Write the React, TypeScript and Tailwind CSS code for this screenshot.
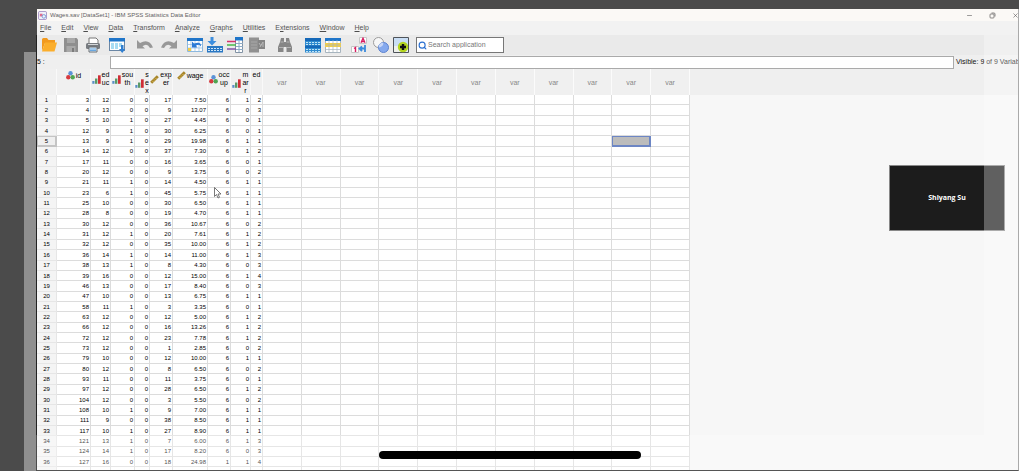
import { Fragment, ReactNode, useState } from 'react';
import { Minus, Search, X } from 'lucide-react';

enum Measure {
  Nominal,
  Ordinal,
  Scale,
}

interface Variable {
  name: string;
  lines: string[];
  width: string;
  measure?: Measure;
}

const VARIABLES: Variable[] = [
  { name: 'id', lines: ['id'], width: 'w-[34px]', measure: Measure.Nominal },
  { name: 'educ', lines: ['ed', 'uc'], width: 'w-[20px]', measure: Measure.Ordinal },
  { name: 'south', lines: ['sou', 'th'], width: 'w-[24px]', measure: Measure.Ordinal },
  { name: 'sex', lines: ['s', 'e', 'x'], width: 'w-[15px]', measure: Measure.Ordinal },
  { name: 'exper', lines: ['exp', 'er'], width: 'w-[23px]', measure: Measure.Scale },
  { name: 'wage', lines: ['wage'], width: 'w-[35px]', measure: Measure.Scale },
  { name: 'occup', lines: ['occ', 'up'], width: 'w-[23px]', measure: Measure.Nominal },
  { name: 'marr', lines: ['m', 'ar', 'r'], width: 'w-[20px]', measure: Measure.Ordinal },
  { name: 'ed', lines: ['ed'], width: 'w-[12px]' },
];

const EMPTY_COLUMNS = Array.from({ length: 11 }, (_, i) => i);

const ROWS = `3 12 0 0 17 7.50 6 1 2
4 13 0 0 9 13.07 6 0 3
5 10 1 0 27 4.45 6 0 1
12 9 1 0 30 6.25 6 0 1
13 9 1 0 29 19.98 6 1 1
14 12 0 0 37 7.30 6 1 2
17 11 0 0 16 3.65 6 0 1
20 12 0 0 9 3.75 6 0 2
21 11 1 0 14 4.50 6 1 1
23 6 1 0 45 5.75 6 1 1
25 10 0 0 30 6.50 6 1 1
28 8 0 0 19 4.70 6 1 1
30 12 0 0 36 10.67 6 0 2
31 12 1 0 20 7.61 6 1 2
32 12 0 0 35 10.00 6 1 2
36 14 1 0 14 11.00 6 1 3
38 13 1 0 8 4.30 6 0 3
39 16 0 0 12 15.00 6 1 4
46 13 0 0 17 8.40 6 0 3
47 10 0 0 13 6.75 6 1 1
58 11 1 0 3 3.35 6 0 1
63 12 0 0 12 5.00 6 1 2
66 12 0 0 16 13.26 6 1 2
72 12 0 0 23 7.78 6 1 2
73 12 0 0 1 2.85 6 0 2
79 10 0 0 12 10.00 6 1 1
80 12 0 0 8 6.50 6 0 2
93 11 0 0 11 3.75 6 0 1
97 12 0 0 28 6.50 6 1 2
104 12 0 0 3 5.50 6 0 2
108 10 1 0 9 7.00 6 1 1
111 9 0 0 38 8.50 6 1 1
117 10 1 0 27 8.90 6 1 1
121 13 1 0 7 6.00 6 1 3
124 14 1 0 17 8.20 6 0 3
127 16 0 0 18 24.98 1 1 4
128 14 1 0 21 12.05 1 0 3`
  .split('\n')
  .map((line) => line.split(' '));

// [label, index of the access key]
const MENUS: [string, number][] = [
  ['File', 0],
  ['Edit', 0],
  ['View', 0],
  ['Data', 0],
  ['Transform', 0],
  ['Analyze', 0],
  ['Graphs', 0],
  ['Utilities', 0],
  ['Extensions', 1],
  ['Window', 0],
  ['Help', 0],
];

interface Tool {
  label: string;
  space: string;
  icon: ReactNode;
}

const TOOLS: Tool[] = [
  {
    label: 'Open',
    space: 'ml-1',
    icon: (
      <>
        <path d="M1 14V2.5Q1 1 2.500 1H6l1.500 2H14v3H4z" fill="#f29a1f" />
        <path d="M1 14.500 4 5.500H16L13.500 14.500z" fill="#fbae2c" />
      </>
    ),
  },
  {
    label: 'Save',
    space: 'ml-1.5',
    icon: (
      <>
        <path d="M1 1h12.500L15 2.500V15H1z" fill="#8f8f8f" />
        <path d="M4 1h8v5H4zM3.500 9h9v6h-9z" fill="#a9a9a9" />
        <path d="M9 11h2v4H9z" fill="#7c7c7c" />
      </>
    ),
  },
  {
    label: 'Print',
    space: 'ml-1.5',
    icon: (
      <>
        <path d="M4 6V1h7l2 2v3" fill="#fff" stroke="#777" />
        <rect x="1" y="6" width="14" height="6" rx="1.500" fill="#777b80" />
        <path d="M3 7.500h10" stroke="#d5d8da" />
        <path d="M4 10h8v5H4z" fill="#dcecf9" stroke="#6c7074" />
        <path d="M5 12h6M5 13.500h6" stroke="#4a95d9" strokeWidth=".8" />
      </>
    ),
  },
  {
    label: 'Recall dialogs',
    space: 'ml-2',
    icon: (
      <>
        <rect x=".5" y="1.500" width="15" height="12" fill="#fff" stroke="#6b87a5" />
        <path d="M0 1h16v3.500H0z" fill="#1f75c9" />
        <path d="M2 6h3v6H2zM6 6h3v6H6zM10 6h3v4h-3z" fill="#a8dcf3" />
        <path d="M12 8h2.500v4H16.500L13.200 16 10 12h2z" fill="#317fd0" />
      </>
    ),
  },
  {
    label: 'Undo',
    space: 'ml-3',
    icon: <path d="M0 3v8.500h8L5.500 9.300Q10 5.500 13 11l3-.5Q12 1 3 6z" fill="#989898" />,
  },
  {
    label: 'Redo',
    space: 'ml-2',
    icon: <path d="M16 3v8.500H8l2.500-2.200Q6 5.500 3 11l-3-.5Q4 1 13 6z" fill="#989898" />,
  },
  {
    label: 'Go to case',
    space: 'ml-2.5',
    icon: (
      <>
        <path d="M.5 1.500h15v13H.5z" fill="#fff" stroke="#8db8dd" />
        <path d="M0 1h16v3H0z" fill="#1f75c9" />
        <path d="M4 4v11M8 4v11M12 4v11M0 7.500h16M0 11h16" stroke="#8fbce2" strokeWidth=".7" />
        <path d="M1 11h3v3H1z" fill="#f5ce46" />
        <path d="M5 4.500v6h5.500L9 8.800q3-2.500 5 .7.500-5.500-7-3z" fill="#2b7bd6" />
      </>
    ),
  },
  {
    label: 'Go to variable',
    space: 'ml-1',
    icon: (
      <>
        <path d="M3.500 0h3v4h3L5 8.500.5 4h3z" fill="#3d8ede" />
        <path d="M0 9h16v6.500H0z" fill="#2a78c4" />
        <path d="M1 11.500h14M1 13.500h14" stroke="#cfe6f7" strokeDasharray="2 1" />
      </>
    ),
  },
  {
    label: 'Variables',
    space: 'ml-1',
    icon: (
      <>
        <path d="M8.500.5h7v15h-7z" fill="#fff" stroke="#8293a5" />
        <path d="M8 0h8v3.500H8z" fill="#1f75c9" />
        <path d="M12 4v11M9 6.500h7M9 9.500h7M9 12.500h7" stroke="#8eabc6" />
        <path d="M0 4.500h9" stroke="#d6336c" strokeWidth="1.500" />
        <path d="M0 8h9" stroke="#49b749" strokeWidth="1.500" />
        <path d="M0 12h9" stroke="#8353a5" strokeWidth="1.500" />
      </>
    ),
  },
  {
    label: 'Run descriptive statistics',
    space: 'ml-1.5',
    icon: (
      <>
        <path d="M0 .5h10v15H0z" fill="#919191" />
        <path d="M9 3h7v9H9z" fill="#858585" />
        <path d="M2 5h6M2 8h6M2 11h6" stroke="#a8a8a8" />
        <path d="m11 10 3-5v5M10 6l2 3" fill="none" stroke="#b8b8b8" />
      </>
    ),
  },
  {
    label: 'Find',
    space: 'ml-3',
    icon: (
      <>
        <path d="M4 1h3v4h2V1h3l1 4 2 5v5H9.500v-5h-3v5H1v-5l2-5z" fill="#868686" />
        <path d="M2 10.500h4M10 10.500h4M3.500 5h3M9.500 5h3" stroke="#b5b5b5" />
      </>
    ),
  },
  {
    label: 'Split file',
    space: 'ml-3',
    icon: (
      <>
        <path d="M0 1h16v14.500H0z" fill="#2f8bd0" />
        <path d="M0 1h16v3H0zM0 8.500h16v2.500H0z" fill="#1568b8" />
        <path d="M1 5.500h14M1 7.500h14M1 12.500h14M1 14.500h14" stroke="#bfe3f5" strokeDasharray="2 1" />
      </>
    ),
  },
  {
    label: 'Select cases',
    space: 'ml-1',
    icon: (
      <>
        <path d="M.5 1.500h15v14H.5z" fill="#fff" stroke="#a8b5bf" />
        <path d="M0 1h16v3H0z" fill="#1f75c9" />
        <path d="M0 6h16v4H0z" fill="#f6cf43" />
        <path d="M4 3v13M8 3v13M12 3v13M0 8h16M0 12.500h16" stroke="#a8b5bf" strokeWidth=".7" />
      </>
    ),
  },
  {
    label: 'Value labels',
    space: 'ml-2.5',
    icon: (
      <>
        <path d="M8.500.5h7v6h-7zM.5 9.500h7v6h-7z" fill="#fff" stroke="#c6c6c6" />
        <path d="m10 5.800 2-4.600 2 4.600M10.800 4.500h2.400" fill="none" stroke="#d81b60" strokeWidth="1.300" />
        <path d="m3 11.500 1.500-1V15" fill="none" stroke="#d81b60" strokeWidth="1.400" />
        <path d="M14 8v7M14 11.500H9m2-2-2.500 2L11 14" fill="none" stroke="#3c8bdc" strokeWidth="1.800" />
      </>
    ),
  },
  {
    label: 'Use variable sets',
    space: 'ml-1.5',
    icon: (
      <>
        <circle cx="5.500" cy="5.500" r="5" fill="#f7f7f7" stroke="#9b9b9b" />
        <circle cx="10.500" cy="10.500" r="5" fill="#85a9ee" stroke="#5c82cf" />
        <path d="M5.700 10.500A5 5 0 0 0 10.400 5.600 5 5 0 0 0 5.700 10.500" fill="#c7d6f6" />
      </>
    ),
  },
  {
    label: 'Customize toolbar',
    space: 'ml-1',
    icon: (
      <>
        <path d="M.5.5h15v15H.5z" fill="#c9def5" stroke="#4f545a" />
        <path d="M1 9h14v6H1z" fill="#edf0ea" />
        <circle cx="10" cy="10" r="5.200" fill="#b4d51f" />
        <path d="M10 7v6M7 10h6" stroke="#111" strokeWidth="2.400" />
      </>
    ),
  },
];

function MeasureIcon({ measure }: { measure: Measure }) {
  return (
    <svg viewBox="0 0 9 9" className="size-[9px] shrink-0" aria-hidden="true">
      {measure === Measure.Nominal && (
        <>
          <circle cx="4.500" cy="2.300" r="2.200" fill="#5b92d6" />
          <circle cx="2.300" cy="6.300" r="2.200" fill="#d63a3f" />
          <circle cx="6.700" cy="6.300" r="2.200" fill="#4fa552" />
        </>
      )}
      {measure === Measure.Ordinal && (
        <>
          <path d="M.3 6h2.200v2.800H.3z" fill="#5a8fc7" />
          <path d="M3 3.500h2.400v5.300H3z" fill="#5c9a68" />
          <path d="M6 .3h2.700v8.500H6z" fill="#cf2e36" />
        </>
      )}
      {measure === Measure.Scale && (
        <>
          <path d="M.2 6.800 6.800.2l2 2L2.200 8.800z" fill="#a8862a" />
          <path d="m2.500 6 1 1M4 4.500l1 1M5.500 3l1 1" stroke="#f0d679" strokeWidth=".7" />
        </>
      )}
    </svg>
  );
}

function TitleBar() {
  return (
    <header className="flex h-[12px] shrink-0 items-center bg-[#faf6f2] pl-px text-[#111]">
      <svg viewBox="0 0 10 10" className="size-[9px] shrink-0" aria-hidden="true">
        <rect x=".5" y=".5" width="9" height="9" rx="1.500" fill="#e9edf8" stroke="#7b5da8" />
        <path d="M2 3h3v3H2z" fill="#d62d5b" />
        <circle cx="6.500" cy="6" r="2" fill="none" stroke="#326cc4" />
      </svg>
      <h1 className="ml-[3px] flex-1 text-[6px] leading-[8px]">Wages.sav [DataSet1] - IBM SPSS Statistics Data Editor</h1>
      <div className="-mr-px flex items-center gap-4">
        <button type="button" aria-label="Minimize">
          <Minus className="size-[7px]" />
        </button>
        <button type="button" aria-label="Restore">
          <svg viewBox="0 0 7 7" className="size-[7px]" fill="none" stroke="currentColor" strokeWidth=".7" aria-hidden="true">
            <rect x="1" y="2" width="4" height="4" rx=".8" />
            <path d="M2.500 1h2.500q1 0 1 1v2.500" />
          </svg>
        </button>
        <button type="button" aria-label="Close">
          <X className="size-[7px]" />
        </button>
      </div>
    </header>
  );
}

function MenuBar() {
  return (
    <nav className="flex h-[14px] shrink-0 items-center gap-[10px] bg-[#ececec] pl-[3px]">
      {MENUS.map(([label, key]) => (
        <button key={label} type="button" className="text-[7px] leading-[10px] text-black">
          {label.slice(0, key)}
          <span className="underline">{label[key]}</span>
          {label.slice(key + 1)}
        </button>
      ))}
    </nav>
  );
}

function Toolbar() {
  const [query, setQuery] = useState('');

  return (
    <div className="flex h-[20px] shrink-0 items-center bg-[#eaeaea]">
      {TOOLS.map(({ label, space, icon }) => (
        <button key={label} type="button" aria-label={label} className={space}>
          <svg viewBox="0 0 16 16" className="size-4" aria-hidden="true">
            {icon}
          </svg>
        </button>
      ))}
      <label className="ml-[7px] flex h-[16px] w-[88px] items-center gap-px border border-[#777] bg-white pl-px">
        <Search className="size-[9px] shrink-0 text-[#2a6fd0]" strokeWidth={3} />
        <input
          type="search"
          aria-label="Search application"
          placeholder="Search application"
          value={query}
          onChange={(e) => setQuery(e.target.value)}
          className="w-full min-w-0 text-[7px] leading-[10px] outline-none placeholder:text-[#777]"
        />
      </label>
    </div>
  );
}

function CellEditor() {
  return (
    <div className="flex h-[14px] shrink-0 items-center bg-[#efefef] text-[7px] leading-[10px] text-[#111]">
      <label htmlFor="cell" className="w-[73px] shrink-0">
        5 :
      </label>
      <input id="cell" className="h-[13px] min-w-0 flex-1 border border-[#aaa] bg-white px-1 outline-none" />
      <p className="w-[64px] shrink-0 overflow-hidden pl-[2px] whitespace-nowrap">Visible: 9 of 9 Variables</p>
    </div>
  );
}

function DataGrid() {
  const selected = { row: 4, column: 9 };

  return (
    <div className="min-h-0 flex-1 overflow-hidden bg-[linear-gradient(#efefef_26px,#f7f7f7_26px)]">
      <table className="h-[409px] w-[653px] table-fixed border-separate border-spacing-0 text-[6px] leading-[7px] text-black">
        <colgroup>
          <col className="w-[20px]" />
          {VARIABLES.map(({ name, width }) => (
            <col key={name} className={width} />
          ))}
          {EMPTY_COLUMNS.map((i) => (
            <col key={i} />
          ))}
        </colgroup>
        <thead className="bg-[#f0f0f0] text-[7px] leading-[8px]">
          <tr>
            <th className="h-[26px] border-r border-[#f9f9f9] p-0" aria-label="Case" />
            {VARIABLES.map(({ name, lines, measure }) => (
              <th key={name} className="border-r border-[#f9f9f9] p-0 pt-[2px] align-top font-normal">
                <div className="flex items-center justify-center gap-px">
                  {measure !== undefined && <MeasureIcon measure={measure} />}
                  <span>
                    {lines.map((line, i) => (
                      <Fragment key={line}>
                        {i > 0 && <br />}
                        {line}
                      </Fragment>
                    ))}
                  </span>
                </div>
              </th>
            ))}
            {EMPTY_COLUMNS.map((i) => (
              <th key={i} className="border-r border-[#fbfbfb] p-0 pt-[2px] font-normal text-[#888]">
                var
              </th>
            ))}
          </tr>
        </thead>
        <tbody className="bg-white">
          {ROWS.map((cells, row) => (
            <tr key={row}>
              <th
                scope="row"
                className={
                  row === selected.row
                    ? 'border-r border-b border-[#c4c4c4] bg-[#efefef] p-0 pt-px font-normal inset-ring inset-ring-[#c4c4c4]'
                    : 'border-r border-b border-[#e6e6e6] bg-[#f4f4f4] p-0 pt-px font-normal'
                }
              >
                {row + 1}
              </th>
              {cells.map((value, i) => (
                <td key={i} className="border-r border-b border-[#dcdcdc] p-0 pt-px pr-px text-right">
                  {value}
                </td>
              ))}
              {EMPTY_COLUMNS.map((i) => (
                <td
                  key={i}
                  className={
                    row === selected.row && i === selected.column
                      ? 'border-r border-b border-[#6d86c4] bg-[#bcbcbc] p-0 inset-ring inset-ring-[#6d86c4]'
                      : 'border-r border-b border-[#dcdcdc] p-0'
                  }
                />
              ))}
            </tr>
          ))}
        </tbody>
      </table>
    </div>
  );
}

export default function App() {
  return (
    <div className="relative flex h-screen overflow-hidden bg-[#4b4b4b] pt-[9px] pl-6 font-['Liberation_Sans',Arial,sans-serif]">
      <div className="mt-[43px] w-[12px] shrink-0 bg-[#8f8f8f]" />
      <div className="mt-[26px] mb-[36px] w-px shrink-0 bg-[#222]" />
      <main className="relative flex min-w-0 flex-1 flex-col border-r border-b border-r-[#aaa] border-b-[#555] bg-[#efefef]">
        <TitleBar />
        <MenuBar />
        <Toolbar />
        <CellEditor />
        <DataGrid />

        <svg viewBox="0 0 8 12" className="absolute top-[178px] left-[177px] h-[12px] w-[8px]" aria-hidden="true">
          <path d="M.5.5v9l2-2L4 11l1.500-.7L4 7h3z" fill="#fff" stroke="#555" strokeWidth=".8" />
        </svg>
        <div className="absolute top-[156px] right-[13px] flex h-[66px] w-[116px] items-center justify-center border border-[#888] bg-[#1c1c1c]">
          <p className="font-['Open_Sans',sans-serif] text-[7px] leading-[10px] font-bold text-white">Shiyang Su</p>
        </div>
        {/* lighter frame of the area outside the shared region */}
        <div className="pointer-events-none absolute inset-0 border-t-[26px] border-r-[34px] border-b-[35px] border-white/30" />
      </main>
      <div className="absolute bottom-3 left-1/2 h-[8px] w-[262px] -translate-x-1/2 rounded-full bg-black" />
    </div>
  );
}
